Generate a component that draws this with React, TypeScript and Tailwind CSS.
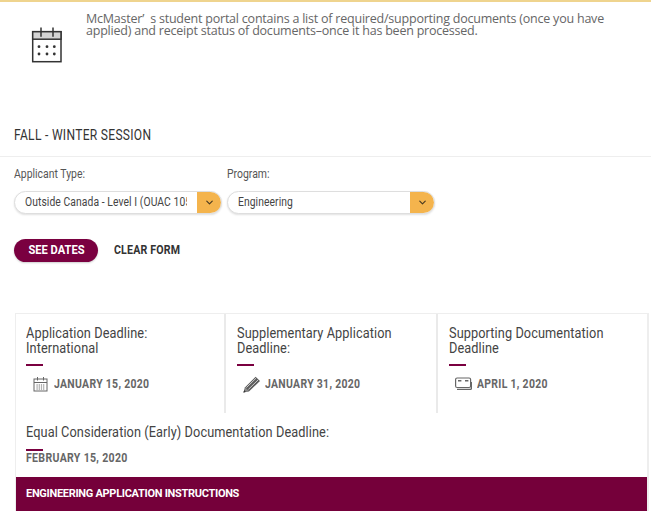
import React from 'react';
import { ChevronDown } from 'lucide-react';

const CalendarLarge = () => (
  <svg width="33" height="36" viewBox="0 0 33 36" fill="none" stroke="#333" strokeWidth="1.5">
    <rect x="2.7" y="4.7" width="28.3" height="30" fill="#fff" />
    <rect x="2.7" y="4.7" width="28.3" height="7.5" fill="#d4d4d4" />
    <path d="M11 .5v9.2M23 .5v9.2" />
    <g fill="#333" stroke="none">
      <circle cx="9" cy="19.7" r="1.4" />
      <circle cx="17" cy="19.7" r="1.4" />
      <circle cx="24.3" cy="19.7" r="1.4" />
      <circle cx="9" cy="27" r="1.4" />
      <circle cx="17" cy="27" r="1.4" />
      <circle cx="24.3" cy="27" r="1.4" />
    </g>
  </svg>
);

const CalendarSmall = () => (
  <svg width="15" height="16" viewBox="0 0 15 16" fill="none" stroke="#666" strokeWidth="1">
    <rect x="1" y="3" width="13" height="12" />
    <path d="M1 6.5h13M4.5 1v3.5M10.5 1v3.5" />
    <path d="M3.5 9h8M3.5 11h8M3.5 13h8" strokeDasharray="1.2 1" />
  </svg>
);

const Pencil = () => (
  <svg width="18" height="17" viewBox="0 0 18 17" className="-ml-[1px]">
    <path d="M.5 16.5l1.6-5.2L12.6.8 17 5 6.2 15.2z" fill="#5c5c5c" />
    <path d="M3.4 11.6L13 2.2M5.4 13.4L15 4" stroke="#d8d8d8" strokeWidth="0.9" />
    <path d="M.5 16.5l1.6-5.2 4.1 3.9z" fill="#8a8a8a" />
    <path d="M.5 16.5l.7-2.4 1.6 1.6z" fill="#333" />
  </svg>
);

const Ticket = () => (
  <svg width="17" height="14" viewBox="0 0 17 14" fill="none" stroke="#666" strokeWidth="1.2" className="-ml-[1px]">
    <rect x=".6" y="1" width="15" height="9.5" rx="1.5" />
    <path d="M3 3.8h3.4M10 3.8h3.4" strokeWidth="1.6" />
    <path d="M2 12.4h13.4a1 1 0 0 0 1-1V5" strokeWidth="1.4" />
  </svg>
);

// Roboto narrowed, the reference uses a condensed cut that isn't installed
const Narrow = ({ children, className = '' }: { children: React.ReactNode; className?: string }) => (
  <span className={`inline-block whitespace-nowrap origin-left ${className}`}>{children}</span>
);

const Select = ({ value }: { value: string }) => (
  <div className="w-[208px] h-[23px] flex rounded-full border border-[#dedede] bg-white shadow-[0_1px_2px_rgba(0,0,0,0.12)] overflow-hidden">
    <span className="flex-1 min-w-0 ml-[10px] mr-[10px] text-[12px] leading-[21px] tracking-[0.1px] text-[#444] overflow-hidden">
      <Narrow className="scale-x-[.86]">{value}</Narrow>
    </span>
    <span className="w-[24px] shrink-0 flex items-center justify-center bg-[#f4b44d]">
      <ChevronDown className="w-[11px] h-[11px] text-[#4a3a20]" strokeWidth={2.5} />
    </span>
  </div>
);

const Field = ({ label, value }: { label: string; value: string }) => (
  <div className="w-[208px]">
    <label className="block text-[12px] leading-[13px] text-[#555] mb-[10px]">
      <Narrow className="scale-x-[.87]">{label}</Narrow>
    </label>
    <Select value={value} />
  </div>
);

const Deadline = ({ title, date, icon, border }: { title: string[]; date: string; icon: React.ReactNode; border?: boolean }) => (
  <div className={`h-[99px] pl-[11px] first:pl-[10px] pt-[12px] ${border ? 'border-r-2 border-[#eaeaea]' : ''}`}>
    <h3 className="text-[15px] leading-[15px] tracking-[0.1px] text-[#444]">
      {title.map((line) => (
        <Narrow key={line} className="block scale-x-[.85]">{line}</Narrow>
      ))}
    </h3>
    <div className="w-[17px] h-[2px] bg-[#7a0040] mt-[8px]" />
    <div className="flex items-center h-[16px] mt-[10px] pl-[7px]">
      <span className="w-[21px] shrink-0 flex items-center">{icon}</span>
      <Narrow className="text-[12px] font-bold tracking-[0.35px] text-[#666] scale-x-[.87]">{date}</Narrow>
    </div>
  </div>
);

export default function App() {
  return (
    <div className="w-[651px] h-[514px] overflow-hidden bg-white [font-family:Roboto,sans-serif]">
      <div className="h-[2px] bg-[#efd48e]" />

      <div className="flex pl-[30px] pt-[11px] h-[113px]">
        <div className="w-[56px] shrink-0 pt-[14px]">
          <CalendarLarge />
        </div>
        <p className="w-[530px] text-[12.5px] leading-[11.5px] text-[#666] [font-family:'Open_Sans',sans-serif] tracking-[-0.22px]">
          McMaster&#8217;&nbsp;&nbsp;s student portal contains a list of required/supporting documents (once you have applied) and receipt status of documents–once it has been processed.
        </p>
      </div>

      <div className="pl-[14px] h-[42px] pt-[13px] border-b border-[#eeeeee]">
        <h2 className="text-[14px] leading-[15px] tracking-[0.35px] text-[#333]">
          <Narrow className="scale-x-[.86]">FALL - WINTER SESSION</Narrow>
        </h2>
      </div>

      <div className="pl-[14px] pt-[11px]">
        <div className="flex gap-[5px]">
          <Field label="Applicant Type:" value="Outside Canada - Level I (OUAC 105" />
          <Field label="Program:" value="Engineering" />
        </div>

        <div className="flex items-center gap-[16px] mt-[25px]">
          <button className="w-[84px] h-[23px] rounded-full bg-[#7a0040] text-white text-[12.5px] font-bold shadow-[0_1px_2px_rgba(0,0,0,0.2)]">
            <span className="inline-block whitespace-nowrap scale-x-[.89]">SEE DATES</span>
          </button>
          <button className="text-[12.5px] font-bold tracking-[0.2px] text-[#333]">
            <Narrow className="scale-x-[.85]">CLEAR FORM</Narrow>
          </button>
        </div>
      </div>

      <div className="ml-[15px] w-[634px] mt-[51px] border-t border-r-2 border-l border-[#eeeeee]">
        <div className="grid grid-cols-[210px_212px_1fr]">
          <Deadline border title={['Application Deadline:', 'International']} date="JANUARY 15, 2020" icon={<CalendarSmall />} />
          <Deadline border title={['Supplementary Application', 'Deadline:']} date="JANUARY 31, 2020" icon={<Pencil />} />
          <Deadline title={['Supporting Documentation', 'Deadline']} date="APRIL 1, 2020" icon={<Ticket />} />
        </div>
        <div className="h-[64px] pl-[10px] pt-[12px]">
          <h3 className="text-[15px] leading-[15px] tracking-[0.1px] text-[#444]">
            <Narrow className="scale-x-[.85]">Equal Consideration (Early) Documentation Deadline:</Narrow>
          </h3>
          <div className="w-[17px] h-[2px] bg-[#7a0040] mt-[9px]" />
          <div className="text-[12px] leading-[14px] font-bold tracking-[0.35px] text-[#666]">
            <Narrow className="scale-x-[.88]">FEBRUARY 15, 2020</Narrow>
          </div>
        </div>
        <div className="h-[34px] flex items-center pl-[10px] bg-[#75003a] text-white text-[11px] font-bold tracking-[-0.3px]">
          ENGINEERING APPLICATION INSTRUCTIONS
        </div>
      </div>
    </div>
  );
}
